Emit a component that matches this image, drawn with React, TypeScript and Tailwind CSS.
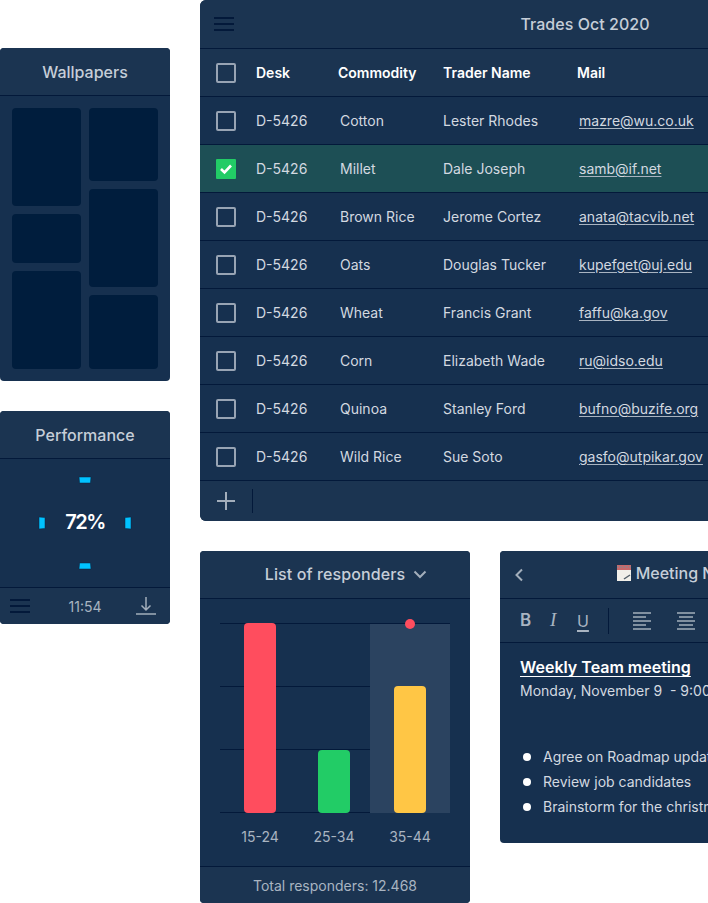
import React from 'react';

const font = 'font-["Inter",sans-serif]';

const Burger = ({ className = '' }: { className?: string }) => (
  <svg width="20" height="14" viewBox="0 0 20 14" className={className}>
    <path d="M0 1h20M0 7h20M0 13h20" stroke="#03193a" strokeWidth="2" />
  </svg>
);

const Checkbox = ({ checked = false }: { checked?: boolean }) =>
  checked ? (
    <div className="w-5 h-5 rounded-[1px] bg-[#22cc66] flex items-center justify-center">
      <svg width="14" height="12" viewBox="0 0 14 12">
        <path d="M2 6l3.500 3.500L12 2.500" fill="none" stroke="#fff" strokeWidth="2.600" />
      </svg>
    </div>
  ) : (
    <div className="w-5 h-5 rounded-[2px] border-2 border-[#98a4b4]" />
  );

const trades = [
  ['Cotton', 'Lester Rhodes', 'mazre@wu.co.uk'],
  ['Millet', 'Dale Joseph', 'samb@if.net'],
  ['Brown Rice', 'Jerome Cortez', 'anata@tacvib.net'],
  ['Oats', 'Douglas Tucker', 'kupefget@uj.edu'],
  ['Wheat', 'Francis Grant', 'faffu@ka.gov'],
  ['Corn', 'Elizabeth Wade', 'ru@idso.edu'],
  ['Quinoa', 'Stanley Ford', 'bufno@buzife.org'],
  ['Wild Rice', 'Sue Soto', 'gasfo@utpikar.gov'],
];

const Wallpapers = () => (
  <div className="w-[170px] rounded-[4px] overflow-hidden bg-[#16304f]">
    <div className="h-12 bg-[#1b3451] border-b border-[#03193a] flex items-center justify-center text-[#c6ced8] text-[16px] font-medium">
      Wallpapers
    </div>
    <div className="flex gap-2 px-3 pt-3 pb-3">
      <div className="flex flex-col gap-2 w-[69px]">
        <div className="h-[98px] rounded-[4px] bg-[#001d3d]" />
        <div className="h-[49px] rounded-[4px] bg-[#001d3d]" />
        <div className="h-[98px] rounded-[4px] bg-[#001d3d]" />
      </div>
      <div className="flex flex-col gap-2 w-[69px]">
        <div className="h-[73px] rounded-[4px] bg-[#001d3d]" />
        <div className="h-[98px] rounded-[4px] bg-[#001d3d]" />
        <div className="h-[74px] rounded-[4px] bg-[#001d3d]" />
      </div>
    </div>
  </div>
);

const Performance = () => (
  <div className="w-[170px] rounded-[4px] overflow-hidden bg-[#16304f]">
    <div className="h-12 bg-[#1b3451] border-b border-[#03193a] flex items-center justify-center text-[#c6ced8] text-[16px] font-medium">
      Performance
    </div>
    <div className="relative h-[128px] pb-[2px] flex items-center justify-center text-white text-[20px] font-semibold tracking-[-1.500px]">
      <svg width="100" height="100" viewBox="0 0 100 100" className="absolute left-[35px] top-[14px]">
        <path d="M44 4h12l-.6 6h-10.800z" fill="#00c2ff" stroke="#0a2240" strokeWidth="0.500" />
        <path d="M44.600 90h10.800l.6 6h-12z" fill="#00c2ff" stroke="#0a2240" strokeWidth="0.500" />
        <path d="M4 44l6 .6v10.800l-6 .6z" fill="#00c2ff" stroke="#0a2240" strokeWidth="0.500" />
        <path d="M90 44.600l6-.6v12l-6-.6z" fill="#00c2ff" stroke="#0a2240" strokeWidth="0.500" />
      </svg>
      72%
    </div>
    <div className="h-[37px] bg-[#1b3451] border-t border-[#03193a] flex items-center justify-between pl-[10px] pr-[14px] text-[#a9b4c1] text-[14px]">
      <Burger />
      <span className="ml-1">11:54</span>
      <svg width="20" height="18" viewBox="0 0 20 18">
        <path d="M10 0v13M5.500 8.500L10 13l4.500-4.500M0 17h20" fill="none" stroke="#a3aebb" strokeWidth="1.500" />
      </svg>
    </div>
  </div>
);

const TradesTable = () => (
  <div className="w-[770px] rounded-[6px] overflow-hidden bg-[#16304f]">
    <div className="relative h-[49px] bg-[#1b3451] border-b border-[#03193a] flex items-center justify-center text-[#c6ced8] text-[16px] font-medium tracking-[0.05px]">
      <Burger className="absolute left-[14px] top-[17px]" />
      Trades Oct 2020
    </div>
    <div className="h-12 bg-[#1b3451] border-b border-[#03193a] flex items-center pl-4 text-white text-[14px] font-semibold">
      <Checkbox />
      <div className="ml-5 w-[82px]">Desk</div>
      <div className="w-[105px]">Commodity</div>
      <div className="w-[134px]">Trader Name</div>
      <div>Mail</div>
    </div>
    {trades.map(([commodity, trader, mail], index) => (
      <div
        key={index}
        className={`h-12 border-b border-[#03193a] flex items-center pl-4 text-[#d3d9e0] text-[14px] ${index === 1 ? 'bg-[#1d4f55]' : ''}`}
      >
        <Checkbox checked={index === 1} />
        <div className="ml-5 w-[84px]">D-5426</div>
        <div className="w-[103px]">{commodity}</div>
        <div className="w-[136px]">{trader}</div>
        <div className="underline underline-offset-2 decoration-[#a9b4c1]">{mail}</div>
      </div>
    ))}
    <div className="h-10 bg-[#1b3451] flex items-center pl-4">
      <svg width="20" height="20" viewBox="0 0 20 20">
        <path d="M10 1v18M1 10h18" stroke="#a3aebb" strokeWidth="2" />
      </svg>
      <div className="ml-4 h-6 w-px bg-[#03193a]" />
    </div>
  </div>
);

const bars = [
  { label: '15-24', slot: 'w-[80px]', height: 'h-[190px]', color: 'bg-[#ff4d5e]' },
  { label: '25-34', slot: 'w-[68px]', height: 'h-[63px]', color: 'bg-[#22cc66]' },
  { label: '35-44', slot: 'w-[80px] ml-[2px]', height: 'h-[127px]', color: 'bg-[#ffc645]', active: true },
];

const Responders = () => (
  <div className="w-[270px] h-[352px] flex flex-col rounded-[4px] overflow-hidden bg-[#16304f]">
    <div className="h-12 pb-[1px] bg-[#1b3451] border-b border-[#03193a] flex items-center justify-center text-[#c6ced8] text-[16px] font-medium tracking-[0.1px]">
      <span className="relative">
        List of responders
        <svg width="14" height="9" viewBox="0 0 14 9" className="absolute left-[148px] top-[8px]">
          <path d="M1.500 1.500L7 7l5.500-5.500" fill="none" stroke="#a3aebb" strokeWidth="2" />
        </svg>
      </span>
    </div>
    <div className="relative mx-5 mt-6 h-[190px]">
      <div className="absolute inset-0 flex flex-col justify-between">
        <div className="h-px bg-[#03193a]" />
        <div className="h-px bg-[#03193a]" />
        <div className="h-px bg-[#03193a]" />
        <div className="h-px bg-[#03193a]" />
      </div>
      <div className="absolute inset-0 flex">
        {bars.map((bar) => (
          <div
            key={bar.label}
            className={`relative flex items-end justify-center ${bar.slot} ${bar.active ? 'bg-[#2b4360] mt-px' : ''}`}
          >
            {bar.active && <div className="absolute top-[-5px] left-[35px] w-[10px] h-[10px] rounded-full bg-[#ff4d5e]" />}
            <div className={`w-8 rounded-[4px] ${bar.height} ${bar.color}`} />
          </div>
        ))}
      </div>
    </div>
    <div className="mx-5 mt-[14px] flex text-[#a9b4c1] text-[14px] leading-5">
      {bars.map((bar) => (
        <div key={bar.label} className={`text-center ${bar.slot}`}>
          {bar.label}
        </div>
      ))}
    </div>
    <div className="mt-auto h-[37px] bg-[#1b3451] border-t border-[#03193a] flex items-center justify-center text-[#a9b4c1] text-[14px]">
      Total responders: 12.468
    </div>
  </div>
);

const AlignLines = ({ center = false }: { center?: boolean }) => (
  <svg width="18" height="18" viewBox="0 0 18 18">
    <path
      d={center ? 'M0 1h18M2 5h14M0 9h18M2 13h14M0 17h18' : 'M0 1h18M0 5h13M0 9h18M0 13h13M0 17h18'}
      stroke="#a3aebb"
      strokeWidth="1.500"
    />
  </svg>
);

const Notes = () => (
  <div className="w-[364px] h-[292px] rounded-[4px] overflow-hidden bg-[#16304f]">
    <div className="relative h-12 pb-[3px] bg-[#1b3451] border-b border-[#03193a] flex items-center justify-center gap-[5px] text-[#c6ced8] text-[16px] font-medium">
      <svg width="10" height="14" viewBox="0 0 10 14" className="absolute left-[14px] top-[17px]">
        <path d="M8 1.500L2.500 7 8 12.500" fill="none" stroke="#a3aebb" strokeWidth="2" />
      </svg>
      <svg width="14" height="16" viewBox="0 0 14 16">
        <rect width="14" height="16" fill="#f1efe9" />
        <rect width="14" height="5" fill="#c8686a" />
        <path d="M1 1v2M4 1v2M7 1v2M10 1v2M13 1v2" stroke="#7f8a96" strokeWidth="1" />
        <path d="M7 14l6-4" stroke="#55606a" strokeWidth="1.500" />
      </svg>
      Meeting Notes
    </div>
    <div className="h-11 bg-[#1b3451] border-b border-[#03193a] flex items-center pl-5 text-[#a9b4c1]">
      <span className="w-[30px] text-[17px] font-semibold">B</span>
      <span className="w-[27px] font-['Liberation_Serif',serif] italic text-[19px]">I</span>
      <span className="w-[31px] text-[16px] underline decoration-2 underline-offset-[3px]">U</span>
      <div className="h-[26px] w-px bg-[#03193a]" />
      <div className="ml-6 flex gap-[26px]">
        <AlignLines />
        <AlignLines center />
      </div>
    </div>
    <div className="pl-5 pt-[14px]">
      <div className="text-white text-[16px] font-semibold leading-5 underline underline-offset-[3px]">Weekly Team meeting</div>
      <div className="mt-1 text-[#d3d9e0] text-[14px] leading-5 whitespace-pre">Monday, November 9  - 9:00 AM</div>
      <ul className="mt-[46px] flex flex-col gap-[5px] text-[#d3d9e0] text-[14px] leading-5">
        {['Agree on Roadmap update', 'Review job candidates', 'Brainstorm for the christmas party'].map((item) => (
          <li key={item} className="flex items-center gap-3 pl-[3px]">
            <span className="w-2 h-2 rounded-full bg-white" />
            {item}
          </li>
        ))}
      </ul>
    </div>
  </div>
);

export default function App() {
  return (
    <div className={`w-[708px] h-[903px] overflow-hidden bg-white flex gap-[30px] ${font}`}>
      <div className="w-[170px] shrink-0 pt-12 flex flex-col gap-[30px]">
        <Wallpapers />
        <Performance />
      </div>
      <div className="flex flex-col gap-[30px]">
        <TradesTable />
        <div className="flex gap-[30px]">
          <Responders />
          <Notes />
        </div>
      </div>
    </div>
  );
}
